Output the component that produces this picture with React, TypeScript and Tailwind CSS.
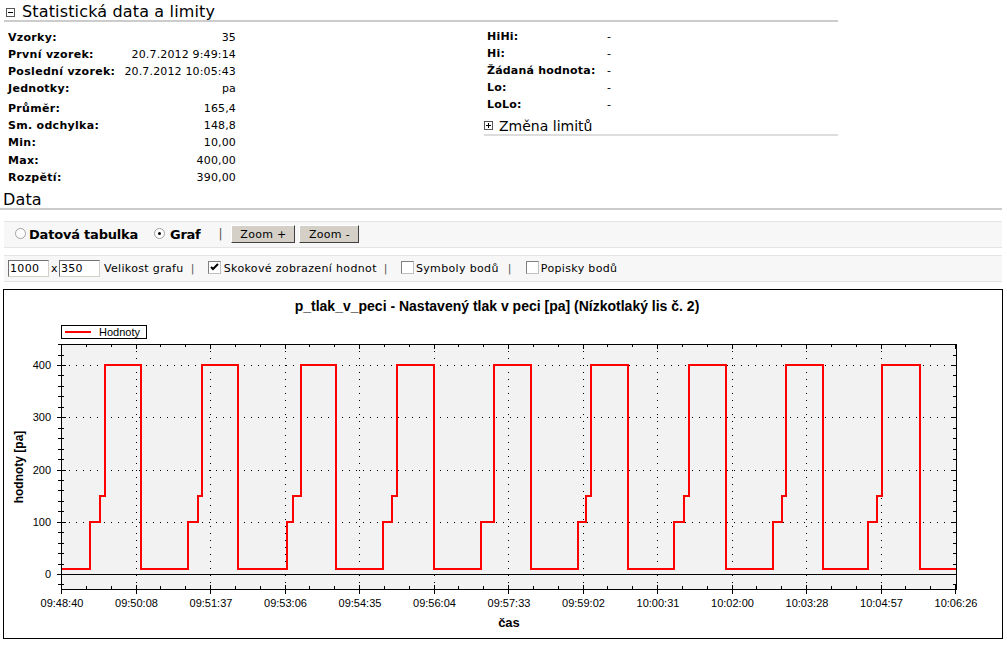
import React from "react";

const OX = 3;
const OY = 289;
const sx = (x: number) => x - OX;
const sy = (y: number) => y - OY;
const yv = (v: number) => 574 - v * 0.5225;

const PL = 62;
const PR = 956;
const PT = 344;
const PB = 589;

const cycles: [number, number | null, number, number][] = [
  [90, 100, 105, 141],
  [188, 198, 202, 238],
  [287, 293, 301, 336],
  [383, 392, 397, 434],
  [481, null, 494, 531],
  [578, 586, 591, 628],
  [674, 684, 689, 726],
  [773, 782, 786, 823],
  [868, 877, 882, 920],
];

function buildPath() {
  const y10 = Math.round(yv(10));
  const y100 = Math.round(yv(100));
  const y150 = Math.round(yv(150));
  const y400 = Math.round(yv(400));
  let d = `M ${sx(PL)} ${sy(y10)}`;
  for (const [a, b, c, e] of cycles) {
    d += ` H ${sx(a)} V ${sy(y100)}`;
    if (b !== null) d += ` H ${sx(b)} V ${sy(y150)}`;
    d += ` H ${sx(c)} V ${sy(y400)} H ${sx(e)} V ${sy(y10)}`;
  }
  d += ` H ${sx(PR)}`;
  return d;
}

const xLabels = [
  "09:48:40",
  "09:50:08",
  "09:51:37",
  "09:53:06",
  "09:54:35",
  "09:56:04",
  "09:57:33",
  "09:59:02",
  "10:00:31",
  "10:02:00",
  "10:03:28",
  "10:04:57",
  "10:06:26",
];

function Chart() {
  const step = (PR - PL) / 12;
  const font = "'Liberation Sans', Arial, sans-serif";
  const yTicks: number[] = [];
  for (let v = -20; v <= 440; v += 20) yTicks.push(v);
  const xMinor: number[] = [];
  for (let i = 0; i <= 36; i++) xMinor.push(PL + (i * step) / 3);

  return (
    <svg width={1000} height={350} className="block">
      <rect x={0.5} y={0.5} width={999} height={349} fill="#ffffff" stroke="#000" />
      <text
        x={sx(497)}
        y={sy(311)}
        textAnchor="middle"
        fontFamily={font}
        fontSize={14}
        fontWeight="bold"
        fill="#000"
      >
        p_tlak_v_peci - Nastavený tlak v peci [pa] (Nízkotlaký lis č. 2)
      </text>
      {/* legend */}
      <rect x={sx(61) + 0.5} y={sy(325) + 0.5} width={85} height={13} fill="#fff" stroke="#000" />
      <line x1={sx(65)} x2={sx(91)} y1={sy(332)} y2={sy(332)} stroke="#ff0000" strokeWidth={2} />
      <text x={sx(99)} y={sy(335.5)} fontFamily={font} fontSize={11} fill="#000">
        Hodnoty
      </text>
      {/* plot area */}
      <rect
        x={sx(PL) - 0.5}
        y={sy(PT) + 0.5}
        width={PR - PL + 1}
        height={PB - PT}
        fill="#f2f2f2"
        stroke="none"
      />
      {/* grid */}
      {[100, 200, 300, 400].map((v) => (
        <line
          key={"h" + v}
          x1={sx(PL)}
          x2={sx(PR)}
          y1={sy(Math.round(yv(v))) + 0.5}
          y2={sy(Math.round(yv(v))) + 0.5}
          stroke="#000"
          strokeDasharray="1 6"
        />
      ))}
      {xLabels.slice(1, 12).map((_, i) => {
        const x = Math.round(PL + (i + 1) * step) - 0.5;
        return (
          <line
            key={"v" + i}
            x1={sx(x)}
            x2={sx(x)}
            y1={sy(PT)}
            y2={sy(PB)}
            stroke="#000"
            strokeDasharray="1 6"
          />
        );
      })}
      {/* zero line */}
      <line
        x1={sx(PL)}
        x2={sx(PR)}
        y1={sy(574) + 0.5}
        y2={sy(574) + 0.5}
        stroke="#000"
      />
      {/* frame */}
      <rect
        x={sx(PL) - 0.5}
        y={sy(PT) + 0.5}
        width={PR - PL + 1}
        height={PB - PT}
        fill="none"
        stroke="#000"
      />
      {/* y ticks */}
      {yTicks.map((v) => {
        const y = sy(Math.round(yv(v))) + 0.5;
        const major = v % 100 === 0;
        return (
          <g key={"yt" + v}>
            <line x1={sx(major ? 57 : 58)} x2={sx(major ? 66 : 64)} y1={y} y2={y} stroke="#000" />
            <line x1={sx(major ? 951 : 953)} x2={sx(PR)} y1={y} y2={y} stroke="#000" />
          </g>
        );
      })}
      {/* x ticks */}
      {xMinor.map((xv, i) => {
        const x = Math.round(xv) - 0.5;
        const major = i % 3 === 0;
        return (
          <g key={"xt" + i}>
            <line x1={sx(x)} x2={sx(x)} y1={sy(PT)} y2={sy(major ? 349 : 347)} stroke="#000" />
            <line x1={sx(x)} x2={sx(x)} y1={sy(major ? 585 : 586)} y2={sy(major ? 594 : 589)} stroke="#000" />
          </g>
        );
      })}
      {/* data */}
      <path d={buildPath()} fill="none" stroke="#ff0000" strokeWidth={2} />
      {/* y labels */}
      {[0, 100, 200, 300, 400].map((v) => (
        <text
          key={"yl" + v}
          x={sx(51)}
          y={sy(yv(v) + 4)}
          textAnchor="end"
          fontFamily={font}
          fontSize={11}
          fill="#000"
        >
          {v}
        </text>
      ))}
      {/* x labels */}
      {xLabels.map((l, i) => (
        <text
          key={"xl" + i}
          x={sx(PL + i * step)}
          y={sy(607)}
          textAnchor="middle"
          fontFamily={font}
          fontSize={11}
          fill="#000"
        >
          {l}
        </text>
      ))}
      <text
        x={sx(509)}
        y={sy(627)}
        textAnchor="middle"
        fontFamily={font}
        fontSize={13}
        fontWeight="bold"
        fill="#000"
      >
        čas
      </text>
      <text
        transform={`translate(${sx(23)} ${sy(467)}) rotate(-90)`}
        textAnchor="middle"
        fontFamily={font}
        fontSize={12}
        fontWeight="bold"
        fill="#000"
      >
        hodnoty [pa]
      </text>
    </svg>
  );
}

function BoxIcon({ plus }: { plus?: boolean }) {
  return (
    <svg width="9" height="9" viewBox="0 0 9 9" className="block shrink-0">
      <rect x="0.5" y="0.5" width="8" height="8" fill="#fff" stroke="#555" />
      <line x1="2" x2="7" y1="4.5" y2="4.5" stroke="#000" />
      {plus && <line x1="4.5" x2="4.5" y1="2" y2="7" stroke="#000" />}
    </svg>
  );
}

function Radio({ checked }: { checked?: boolean }) {
  return (
    <span className="relative inline-block w-[11px] h-[11px] rounded-full border border-[#a0a0a0] bg-white shrink-0">
      {checked && (
        <span className="absolute left-[3px] top-[3px] w-[3px] h-[3px] rounded-full bg-black" />
      )}
    </span>
  );
}

function Check({ checked }: { checked?: boolean }) {
  return (
    <span className="inline-block w-[13px] h-[13px] border border-t-[#808080] border-l-[#808080] border-b-[#c0c0c0] border-r-[#c0c0c0] bg-white shrink-0">
      {checked && (
        <svg width="11" height="11" viewBox="0 0 11 11" className="block">
          <path d="M2 5 L4 7 L9 2" fill="none" stroke="#000" strokeWidth="2" />
        </svg>
      )}
    </span>
  );
}

function Sep({ className }: { className?: string }) {
  return <span className={"text-[#555] " + (className ?? "")}>|</span>;
}

const leftRows1: [string, string][] = [
  ["Vzorky:", "35"],
  ["První vzorek:", "20.7.2012 9:49:14"],
  ["Poslední vzorek:", "20.7.2012 10:05:43"],
  ["Jednotky:", "pa"],
];
const leftRows2: [string, string][] = [
  ["Průměr:", "165,4"],
  ["Sm. odchylka:", "148,8"],
  ["Min:", "10,00"],
  ["Max:", "400,00"],
  ["Rozpětí:", "390,00"],
];
const rightRows: [string, string][] = [
  ["HiHi:", "-"],
  ["Hi:", "-"],
  ["Žádaná hodnota:", "-"],
  ["Lo:", "-"],
  ["LoLo:", "-"],
];

export default function App() {
  return (
    <div className="w-[1007px] h-[645px] overflow-hidden bg-white text-black font-['DejaVu_Sans',sans-serif] text-[11px] leading-none">
      {/* Section heading */}
      <div className="ml-[4px] w-[834px] h-[22px] border-b-2 border-[#cccccc] flex items-center gap-[7px] pl-[2px] pt-[4px]">
        <BoxIcon />
        <span className="text-[16px] tracking-[0.15px]">Statistická data a limity</span>
      </div>
      <div className="ml-[4px] w-[834px] flex">
        <div className="w-[480px] pl-[4px] pt-[7px]">
          <div className="w-[228px]">
            {leftRows1.map(([l, v]) => (
              <div key={l} className="h-[17px] flex items-center justify-between">
                <span className="font-bold tracking-[0.3px]">{l}</span>
                <span className="tracking-[0.15px]">{v}</span>
              </div>
            ))}
            <div className="h-[3px]" />
            {leftRows2.map(([l, v]) => (
              <div key={l} className="h-[17.2px] flex items-center justify-between">
                <span className="font-bold tracking-[0.3px]">{l}</span>
                <span className="tracking-[0.15px]">{v}</span>
              </div>
            ))}
          </div>
        </div>
        <div className="flex-1 pt-[6px]">
          {rightRows.map(([l, v]) => (
            <div key={l} className="h-[17px] flex items-center pl-[3px]">
              <span className="w-[120px] font-bold tracking-[0.2px]">{l}</span>
              <span>{v}</span>
            </div>
          ))}
          <div className="h-[23px] border-b-2 border-[#dddddd] flex items-center gap-[6px] pt-[4px]">
            <BoxIcon plus />
            <span className="text-[14px]">Změna limitů</span>
          </div>
        </div>
      </div>
      {/* Data heading */}
      <div className="w-[1002px] h-[24px] border-b-2 border-[#cccccc] flex items-center pl-[3px] pt-[6px]">
        <span className="text-[16px] tracking-[0.15px]">Data</span>
      </div>
      {/* Toolbar 1 */}
      <div className="mt-[11px] ml-[4px] w-[998px] h-[27px] bg-[#f7f7f7] border-y border-[#e4e4e4] flex items-center">
        <span className="ml-[11px]">
          <Radio />
        </span>
        <span className="ml-[3px] text-[13px] font-bold tracking-[-0.2px]">Datová tabulka</span>
        <span className="ml-[16px]">
          <Radio checked />
        </span>
        <span className="ml-[5px] text-[13px] font-bold tracking-[-0.3px]">Graf</span>
        <Sep className="ml-[18px] text-[12px]" />
        <button className="ml-[9px] w-[64px] h-[18px] bg-[#d4d0c8] border border-t-white border-l-white border-b-[#404040] border-r-[#404040] text-[11px] leading-none tracking-[0.3px]">
          Zoom +
        </button>
        <button className="ml-[4px] w-[60px] h-[18px] bg-[#d4d0c8] border border-t-white border-l-white border-b-[#404040] border-r-[#404040] text-[11px] leading-none tracking-[0.3px]">
          Zoom -
        </button>
      </div>
      {/* Toolbar 2 */}
      <div className="mt-[7px] ml-[4px] w-[998px] h-[27px] bg-[#f7f7f7] border-y border-[#e4e4e4] flex items-center tracking-[0.35px]">
        <span className="ml-[4px] w-[41px] h-[17px] bg-white border border-t-[#707070] border-l-[#707070] border-b-[#d4d0c8] border-r-[#d4d0c8] flex items-center pl-[1px]">
          1000
        </span>
        <span className="ml-[2px]">x</span>
        <span className="ml-[1px] w-[41px] h-[17px] bg-white border border-t-[#707070] border-l-[#707070] border-b-[#d4d0c8] border-r-[#d4d0c8] flex items-center pl-[1px]">
          350
        </span>
        <span className="ml-[4px]">Velikost grafu</span>
        <Sep className="ml-[7px]" />
        <span className="ml-[13px]">
          <Check checked />
        </span>
        <span className="ml-[3px]">Skokové zobrazení hodnot</span>
        <Sep className="ml-[7px]" />
        <span className="ml-[13px]">
          <Check />
        </span>
        <span className="ml-[2px]">Symboly bodů</span>
        <Sep className="ml-[9px]" />
        <span className="ml-[14px]">
          <Check />
        </span>
        <span className="ml-[2px]">Popisky bodů</span>
      </div>
      {/* Chart */}
      <div className="mt-[7px] ml-[3px]">
        <Chart />
      </div>
    </div>
  );
}
